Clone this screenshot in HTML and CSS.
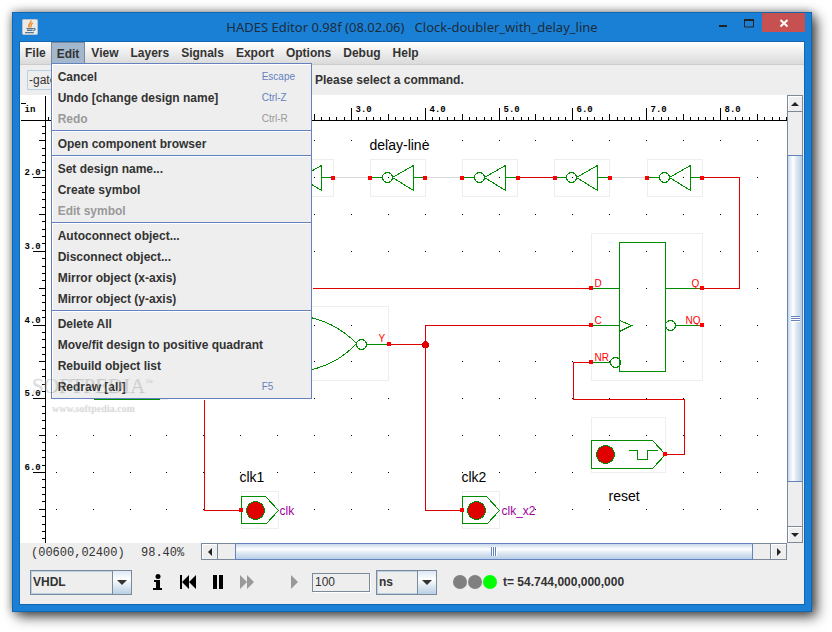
FILE: index.html
```html
<!DOCTYPE html>
<html lang="en">
<head>
<meta charset="utf-8">
<title>HADES Editor</title>
<link rel="stylesheet" href="styles.css">
</head>
<body>
<div class="window">
  <header class="titlebar">
    <svg class="app-icon" width="16" height="16" viewBox="0 0 16 16" aria-hidden="true">
      <rect x=".5" y=".5" width="15" height="15" rx="1" fill="#eceae6" stroke="#b9c4cc"/>
      <path d="M9 1.500C10 4 5 5 7.300 8.700M10.800 4.200C7.600 5.500 9.800 6.600 8.800 8.500" fill="none" stroke="#ee8a2c" stroke-width="1.400"/>
      <path d="M4.500 9.600h6.800M5 11.300h5.500M3 13.600h8.800M11.500 9.500c2-.6 2.200 1.700-.4 2.200" fill="none" stroke="#54799a" stroke-width="1.200"/>
    </svg>
    <h1 class="title">HADES Editor 0.98f (08.02.06)&nbsp;&nbsp; Clock-doubler_with_delay_line</h1>
    <div class="window-buttons">
      <button class="win-btn" aria-label="Minimize"><svg width="10" height="10"><path d="M1 8h8" stroke="#222" stroke-width="2"/></svg></button>
      <button class="win-btn" aria-label="Maximize"><svg width="10" height="10"><path d="M.5 1v8h9V1" fill="none" stroke="#222"/><path d="M0 2h10" stroke="#222" stroke-width="2"/></svg></button>
      <button class="win-btn close" aria-label="Close"><svg width="10" height="10"><path d="M1.500 2l7 6.500M8.500 2l-7 6.500" stroke="#fff" stroke-width="2"/></svg></button>
    </div>
  </header>

  <main class="client">
    <nav class="menubar" aria-label="Main menu">
      <button>File</button>
      <div class="menu-open">
        <button class="active" aria-expanded="true">Edit</button>
        <div class="popup" role="menu">
          <button role="menuitem">Cancel <kbd>Escape</kbd></button>
          <button role="menuitem">Undo [change design name] <kbd>Ctrl-Z</kbd></button>
          <button role="menuitem" disabled>Redo <kbd>Ctrl-R</kbd></button>
          <hr>
          <button role="menuitem">Open component browser</button>
          <hr>
          <button role="menuitem">Set design name...</button>
          <button role="menuitem">Create symbol</button>
          <button role="menuitem" disabled>Edit symbol</button>
          <hr>
          <button role="menuitem">Autoconnect object...</button>
          <button role="menuitem">Disconnect object...</button>
          <button role="menuitem">Mirror object (x-axis)</button>
          <button role="menuitem">Mirror object (y-axis)</button>
          <hr>
          <button role="menuitem">Delete All</button>
          <button role="menuitem">Move/fit design to positive quadrant</button>
          <button role="menuitem">Rebuild object list</button>
          <button role="menuitem">Redraw [all] <kbd>F5</kbd></button>
        </div>
      </div>
      <button>View</button>
      <button>Layers</button>
      <button>Signals</button>
      <button>Export</button>
      <button>Options</button>
      <button>Debug</button>
      <button>Help</button>
    </nav>

    <div class="toolbar">
      <input class="message-field" type="text" value="-gate" aria-label="Component">
      <span>Please select a command.</span>
    </div>

    <div class="workspace">
      <div class="canvas">
        <svg class="drawing" aria-label="Clock doubler circuit">
          <defs>
            <g id="inverter">
              <path class="bbox" d="M0-18H55V19H0Z"/>
              <path class="part" d="M0 0H12M22 0L43-12V13L22 0M43 0H55"/>
              <circle class="part" cx="17" cy="0" r="5"/>
            </g>
            <rect id="pin" x="-2.500" y="-2.500" width="4" height="4" class="pin"/>
            <g id="probe">
              <path class="bbox" d="M0-19H37V18H0Z"/>
              <path class="part" d="M0-14H24L37 0 25 13H0Z"/>
              <circle class="lamp" cx="14" cy="0" r="9"/>
              <use href="#pin"/>
            </g>
          </defs>
          <g transform="translate(-19.5 -94.500)">
            <g id="grid"></g>
            <path class="idle" d="M333 177H370M425 177H462M609 177H646"/>
            <path class="wire" d="M517 177H554M702 177H739V288H702M312 288H591M388 344H425M591 325H425V510H462M591 362H573V399H684V454H665M204 399V510H241"/>
            <use href="#inverter" x="278" y="177"/>
            <use href="#inverter" x="370" y="177"/>
            <use href="#inverter" x="462" y="177"/>
            <use href="#inverter" x="554" y="177"/>
            <use href="#inverter" x="647" y="177"/>
            <path class="bbox" d="M300 306H388V380H300M159 399H167"/>
            <path class="part" d="M93 399H159M300 315Q334 320 356 343Q334 367 300 371M366 344H388"/>
            <circle class="part" cx="361" cy="344" r="5"/>
            <circle class="junction" cx="425" cy="344" r="3"/>

            <path class="bbox" d="M591 233H702V380H591ZM591 417H665V472H591Z"/>
            <path class="part" d="M619 242H665V371H619ZM591 288H619M591 325H619M665 288H702M675 325H702M591 362H610M619 320L631 325 619 331"/>
            <circle class="part" cx="670" cy="325" r="5"/>
            <circle class="part" cx="615" cy="362" r="5"/>
            <path class="part" d="M591 440H652L665 454 652 468H591ZM628 450H637V459H647V450H657"/>
            <circle class="lamp" cx="605" cy="454" r="9"/>
            <use href="#probe" x="241" y="510"/>
            <use href="#probe" x="462" y="510"/>
            <use href="#pin" x="333" y="178"/><use href="#pin" x="370" y="178"/>
            <use href="#pin" x="425" y="178"/><use href="#pin" x="462" y="178"/>
            <use href="#pin" x="518" y="178"/><use href="#pin" x="555" y="178"/>
            <use href="#pin" x="610" y="178"/><use href="#pin" x="647" y="178"/>
            <use href="#pin" x="702" y="178"/><use href="#pin" x="389" y="344"/>
            <use href="#pin" x="591" y="288"/><use href="#pin" x="591" y="325"/>
            <use href="#pin" x="591" y="362"/><use href="#pin" x="702" y="288"/>
            <use href="#pin" x="702" y="325"/><use href="#pin" x="665" y="454"/>
            <g class="pin-name">
              <text x="378" y="341">Y</text>
              <text x="594" y="286">D</text>
              <text x="594" y="323">C</text>
              <text x="594" y="360">NR</text>
              <text x="691" y="286">Q</text>
              <text x="685" y="323">NQ</text>
            </g>
            <g class="label">
              <text x="369" y="149">delay-line</text>
              <text x="239" y="481">clk1</text>
              <text x="461" y="481">clk2</text>
              <text x="608" y="500">reset</text>
            </g>
            <g class="signal">
              <text x="279" y="514">clk</text>
              <text x="501" y="514">clk_x2</text>
            </g>
            <g id="rulers" class="rulers">
              <text x="24" y="111">in</text>
            </g>
          </g>
        </svg>
        <div class="watermark" aria-hidden="true">
          <div class="mark-name">SOFTPEDIA<sup>™</sup></div>
          <div class="mark-site">www.softpedia.com</div>
        </div>
      </div>
      <div class="scroll vertical">
        <button aria-label="Scroll up"><svg width="8" height="4"><path d="M0 4L4 0 8 4Z"/></svg></button>
        <div class="track"><div class="thumb"></div></div>
        <button aria-label="Scroll down"><svg width="8" height="4"><path d="M0 0L4 4 8 0Z"/></svg></button>
      </div>
    </div>

    <div class="status">
      <span class="coords">(00600,02400)</span>
      <span class="zoom">98.40%</span>
      <div class="scroll horizontal">
        <button aria-label="Scroll left"><svg width="4" height="8"><path d="M4 0L0 4 4 8Z"/></svg></button>
        <div class="track"><div class="thumb"></div></div>
        <button aria-label="Scroll right"><svg width="4" height="8"><path d="M0 0L4 4 0 8Z"/></svg></button>
      </div>
    </div>

    <footer class="controls">
      <div class="combo language">
        <select aria-label="Language"><option>VHDL</option></select>
        <span class="arrow"><svg width="10" height="5"><path d="M0 0H10L5 5Z"/></svg></span>
      </div>
      <div class="transport">
        <button aria-label="Information"><svg width="10" height="16"><circle cx="5" cy="2.500" r="2.500"/><path d="M1 6h6v8h2v2H0v-2h3V8H1Z"/></svg></button>
        <button aria-label="Rewind"><svg width="16" height="14"><path d="M0 0h2v14H0ZM9 0v14L2 7ZM16 0v14L9 7Z"/></svg></button>
        <button aria-label="Pause"><svg width="10" height="14"><path d="M0 0h4v14H0ZM6 0h4v14H6Z"/></svg></button>
        <button aria-label="Fast forward" disabled><svg width="14" height="14"><path d="M0 0L7 7 0 14ZM7 0l7 7-7 7Z"/></svg></button>
        <button class="step" aria-label="Step" disabled><svg width="7" height="14"><path d="M0 0L7 7 0 14Z"/></svg></button>
      </div>
      <input class="duration" type="text" value="100" aria-label="Duration">
      <div class="combo unit">
        <select aria-label="Unit"><option>ns</option></select>
        <span class="arrow"><svg width="10" height="5"><path d="M0 0H10L5 5Z"/></svg></span>
      </div>
      <div class="lights"><i></i><i></i><i class="on"></i></div>
      <output class="time">t= 54.744,000,000,000</output>
    </footer>
  </main>
</div>
<script src="rulers.js"></script>
</body>
</html>
```
FILE: styles.css
```css
* { box-sizing: border-box; }

body {
  margin: 0;
  min-height: 100vh;
  display: flex;
  padding: 12px 20px 20px 12px;
  background: #fff;
  color: #333;
  font: bold 12px/16px "Liberation Sans", Arial, sans-serif;
}

button, input, select {
  font: inherit;
  color: inherit;
  margin: 0;
  padding: 0;
  border: 0;
  background: none;
}

svg { display: block; }

.window {
  flex: 1;
  display: flex;
  flex-direction: column;
  min-width: 0;
  padding: 0 7px 7px;
  border: 1px solid #1566ae;
  background: #1a80d6;
  box-shadow: 5px 5px 12px rgba(0, 0, 0, .65), 0 0 9px rgba(0, 0, 0, .4);
}

.titlebar {
  display: grid;
  grid-template-columns: 1fr auto 1fr;
  height: 29px;
}

.app-icon { margin: 6px 0 0 2px; }

.title {
  margin: 0;
  padding-top: 4px;
  font: 13px/20px "Noto Sans", sans-serif;
  color: #1c2c3a;
  white-space: nowrap;
}

.window-buttons { display: flex; justify-content: flex-end; margin-right: -1px; }
.win-btn { width: 26px; height: 19px; display: grid; place-items: center; }
.win-btn.close { width: 43px; background: #c75050; }

.client {
  flex: 1;
  display: flex;
  flex-direction: column;
  background: #eee;
  box-shadow: 0 0 0 1px #1566ae;
}

.menubar {
  display: flex;
  height: 23px;
  background: linear-gradient(#fff, #dadada);
  border-bottom: 1px solid #ccc;
}

.menubar > button, .menu-open > button { padding: 0 6px; height: 22px; }
.menubar > button:first-child { padding: 0 5px; }
.menu-open { position: relative; }
.menu-open > .active {
  background: #a3b8cc;
  border: 1px solid #7a8a99;
  border-bottom: 0;
  padding: 0 5px;
}

.popup {
  position: absolute;
  z-index: 2;
  top: 21px;
  left: 0;
  width: 261px;
  padding: 2px 0 1px;
  border: 1px solid #6382bf;
  background: #eee;
  box-shadow: inset 1px 1px #fff;
}

.popup button {
  display: grid;
  grid-template-columns: 1fr 43px;
  align-items: center;
  width: 100%;
  height: 21px;
  padding: 0 6px;
  text-align: left;
  white-space: nowrap;
}

.popup button:disabled { color: #999; }
.popup kbd { font: 10px/16px "Liberation Sans", Arial, sans-serif; color: #6382bf; }
.popup :disabled kbd { color: #999; }
.popup hr { height: 2px; margin: 1px 0; border: 0; border-top: 1px solid #6382bf; background: #fff; }

.toolbar {
  display: flex;
  align-items: center;
  gap: 8px;
  height: 30px;
  padding: 0 7px;
}

.message-field {
  width: 280px;
  height: 20px;
  border: 1px solid #b8cfe5;
  padding: 0 1px;
  font-weight: normal;
}

.workspace { flex: 1; display: flex; min-height: 0; }

.canvas {
  position: relative;
  flex: 1;
  background: #fff;
}

.drawing {
  width: 100%;
  height: 100%;
  overflow: hidden;
  shape-rendering: crispEdges;
}

.bbox, .part, .wire, .idle { fill: none; }
.bbox { stroke: #eee; }
.part { stroke: #008c00; }
.wire { stroke: #e00000; }
.idle { stroke: #d8d8d8; }
.pin { fill: #f00; }
.junction { fill: #e00000; stroke: #e00000; }
.lamp { fill: #e00000; stroke: #008c00; }
.drawing text { font-weight: normal; }
.drawing .label { font-size: 14px; fill: #000; }
.drawing .signal { font-size: 12px; fill: #a000a0; }
.drawing .pin-name { font-size: 10px; fill: #f00; }
.rulers text { font: bold 9px "Liberation Mono", monospace; fill: #000; }
.rulers path { fill: none; stroke: #000; }
.dot { fill: #000; }

.watermark {
  position: absolute;
  z-index: 3;
  left: 11px;
  top: 278px;
  pointer-events: none;
  color: rgba(255, 255, 255, .3);
  text-shadow: 1px 1px 1px rgba(0, 0, 0, .2);
}

.mark-name { font: 21px/24px "Liberation Serif", serif; }
.mark-name sup { font-size: 8px; line-height: 8px; vertical-align: 8px; }
.mark-site { font: bold 10px/22px "Liberation Serif", serif; padding-left: 20px; }

.scroll { display: flex; background: #eee; border: 1px solid #7a8a99; }
.scroll button { display: grid; place-items: center; flex: none; box-shadow: inset 1px 1px #fff; }
.scroll svg { fill: #222; }
.track { flex: 1; display: flex; }

.vertical { flex-direction: column; width: 16px; margin-right: 1px; }
.vertical button { height: 15px; }
.vertical .track { flex-direction: column; border: solid #7a8a99; border-width: 1px 0; padding: 43px 0 44px; }
.vertical .thumb {
  flex: 1;
  margin: 0 -1px;
  border: 1px solid #6382bf;
  background:
    repeating-linear-gradient(#6382bf 0 1px, #fff 1px 2px) center / 9px 6px no-repeat,
    linear-gradient(90deg, #c8d8ea, #fff 35%, #dde8f3 60%, #b8cfe5);
}

.status { display: flex; height: 17px; padding: 0 17px 0 11px; }
.coords, .zoom { font: 12px/20px "Liberation Mono", monospace; }
.coords { width: 110px; }
.zoom { width: 60px; }

.horizontal { flex: 1; }
.horizontal button { width: 15px; }
.horizontal .track { border: solid #7a8a99; border-width: 0 1px; padding: 0 17px; }
.horizontal .thumb {
  flex: 1;
  margin: -1px 0;
  border: 1px solid #6382bf;
  background:
    repeating-linear-gradient(90deg, #6382bf 0 1px, #fff 1px 2px) center / 6px 9px no-repeat,
    linear-gradient(#c8d8ea, #fff 35%, #dde8f3 60%, #b8cfe5);
}

.controls {
  display: flex;
  align-items: center;
  height: 44px;
  padding: 0 10px;
}

.combo {
  position: relative;
  height: 25px;
  border: 1px solid #7a8a99;
  box-shadow: inset 0 0 0 1px #b8cfe5;
}

.combo select { appearance: none; width: 100%; height: 100%; padding: 0 2px; }
.language { width: 102px; }
.unit { width: 61px; }

.arrow {
  position: absolute;
  inset: 0 0 0 auto;
  width: 19px;
  display: grid;
  place-items: center;
  border-left: 1px solid #7a8a99;
  background: linear-gradient(#dde8f3, #fff 35%, #b8cfe5);
  pointer-events: none;
}

.arrow svg { fill: #333; }

.transport { display: flex; align-items: center; gap: 17px; margin: 0 14px 0 21px; }
.transport svg { fill: #000; }
.transport :disabled svg { fill: #999; }
.transport .step { margin-left: 20px; }

.duration {
  width: 58px;
  height: 19px;
  margin-right: 6px;
  padding: 0 2px;
  border: 1px solid #7a8a99;
  box-shadow: 1px 1px #fff;
  font-weight: normal;
}

.lights { display: flex; gap: 1px; margin: 0 6px 0 16px; }
.lights i { width: 14px; height: 14px; border-radius: 50%; background: #808080; }
.lights .on { background: #0f0; }
```
FILE: rulers.js
```js
// Fills in the grid dots and both rulers at the current zoom.
const NS = 'http://www.w3.org/2000/svg';
const STEP_X = 36.9, STEP_Y = 36.85;
const ORIGIN_X = 129.5, ORIGIN_Y = 103.45;
const END = 2400;

function add(parent, name, attrs, text) {
  const node = document.createElementNS(NS, name);
  for (const key in attrs) node.setAttribute(key, attrs[key]);
  if (text) node.textContent = text;
  parent.append(node);
}

const grid = document.getElementById('grid');
let dots = '';
for (let i = -2; i < 50; i++) {
  for (let j = 1; j < 30; j++) {
    const x = Math.round(ORIGIN_X + i * STEP_X), y = Math.round(ORIGIN_Y + j * STEP_Y);
    dots += `M${x - 0.5} ${y - 0.5}h1v1h-1z`;
  }
}
add(grid, 'path', { class: 'dot', d: dots });

const rulers = document.getElementById('rulers');
let lines = `M20 120H${END}M45 95V${END}M20 103H25`;
for (let n = -11; n < 250; n++) {
  const x = Math.round(ORIGIN_X + n * STEP_X / 5);
  lines += `M${x} ${n % 10 === 0 ? 107 : n % 5 === 0 ? 113 : 116}V120`;
}
for (let n = 3; n < 150; n++) {
  const y = Math.round(ORIGIN_Y + n * STEP_Y / 5);
  lines += `M${n % 10 === 0 ? 32 : n % 5 === 0 ? 38 : 41} ${y}H45`;
}
add(rulers, 'path', { d: lines });
for (let k = 3; k <= 8; k++) {
  add(rulers, 'text', { x: Math.round(ORIGIN_X + 4 + k * 2 * STEP_X), y: 111 }, `${k}.0`);
}
for (let k = 2; k <= 6; k++) {
  add(rulers, 'text', { x: 24, y: Math.round(ORIGIN_Y + (k - 1) * 2 * STEP_Y - 3) }, `${k}.0`);
}
```
